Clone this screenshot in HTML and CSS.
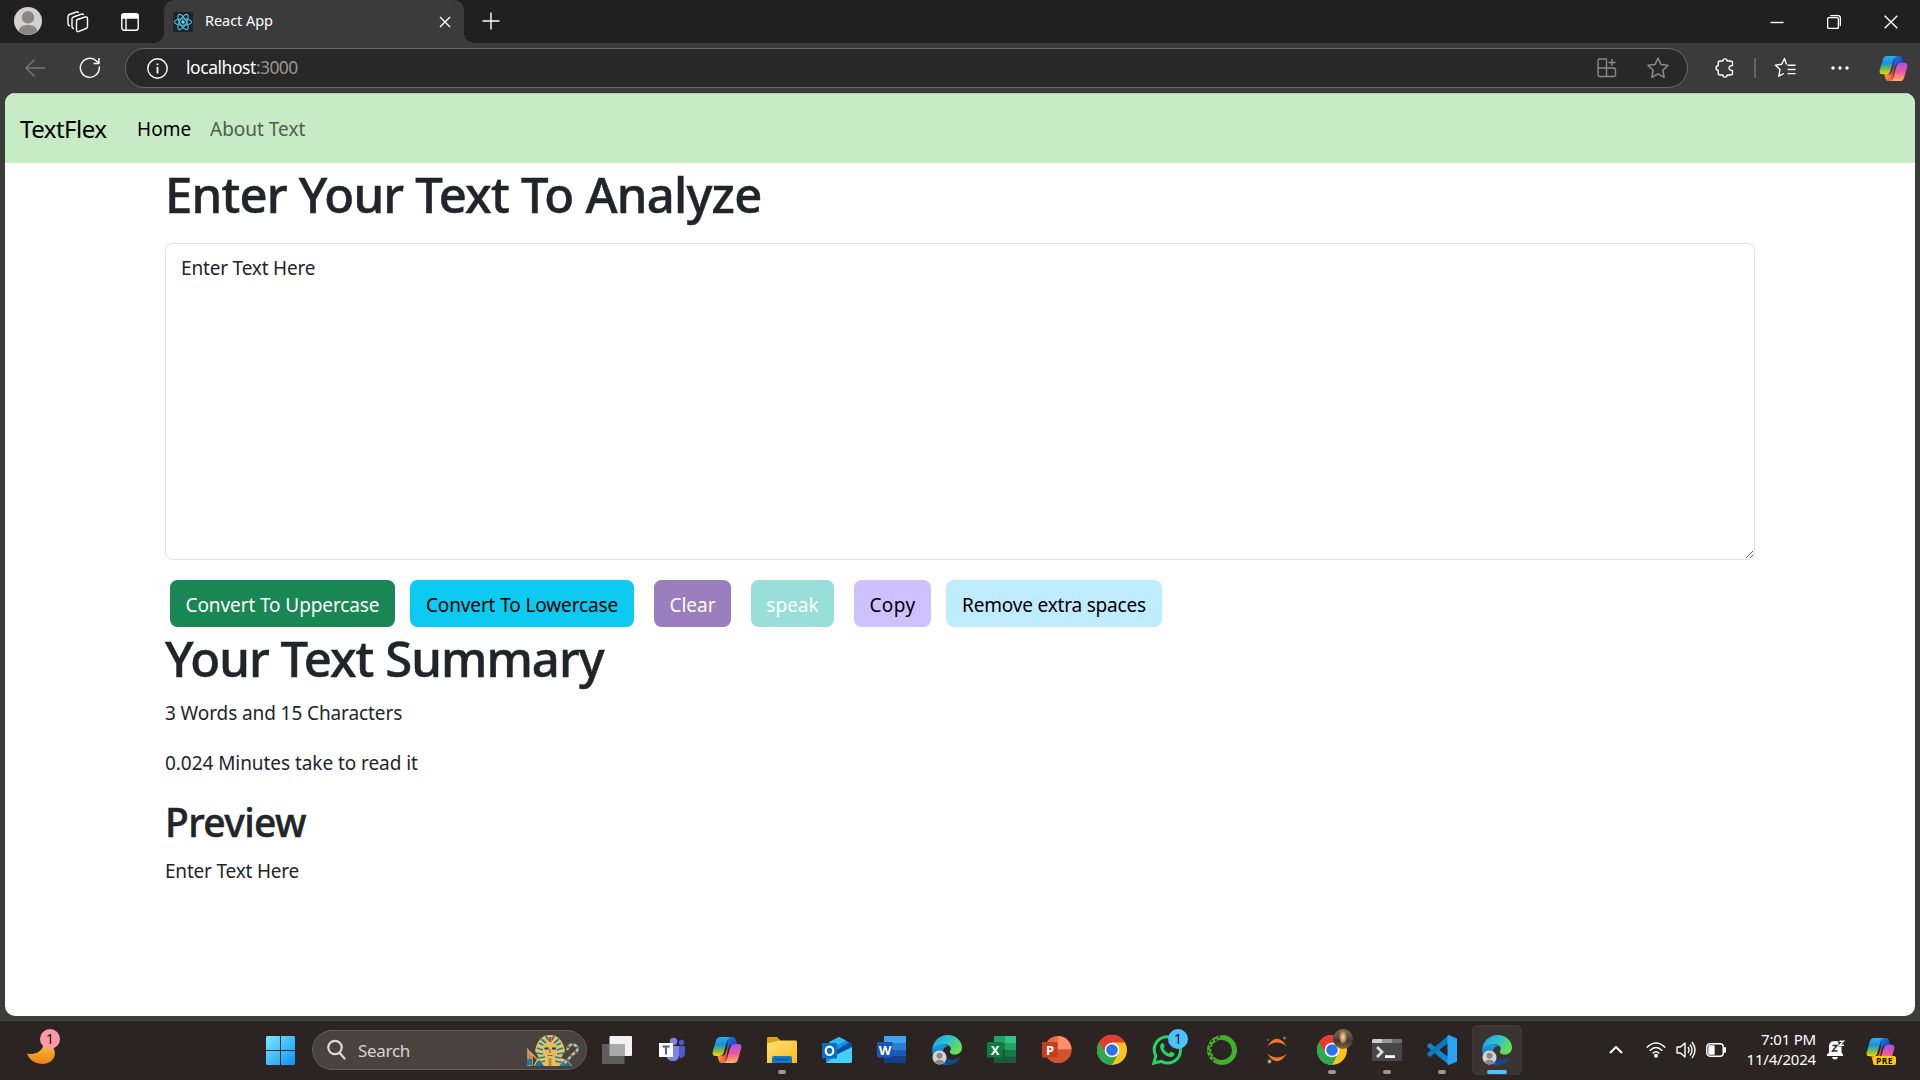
FILE: index.html
```
<!DOCTYPE html>
<html lang="en">
<head>
<meta charset="utf-8">
<title>React App</title>
<link rel="stylesheet" href="styles.css">
</head>
<body>
<svg class="defs" width="0" height="0" aria-hidden="true">
  <defs>
    <linearGradient id="cpA" x1="0" y1="0" x2="0" y2="1"><stop offset="0" stop-color="#21b4f0"/><stop offset=".4" stop-color="#1e8edb"/><stop offset=".7" stop-color="#6cbf50"/><stop offset="1" stop-color="#fbd303"/></linearGradient>
    <linearGradient id="cpB" x1="0" y1="0" x2="0" y2="1"><stop offset="0" stop-color="#a053f0"/><stop offset=".5" stop-color="#f0569a"/><stop offset="1" stop-color="#ffb45c"/></linearGradient>
    <linearGradient id="cpC" x1="0" y1="0" x2="1" y2="1"><stop offset="0" stop-color="#1d7be0"/><stop offset="1" stop-color="#1c33c0"/></linearGradient>
    <linearGradient id="cpD" x1="0" y1="0" x2="1" y2="0"><stop offset="0" stop-color="#ffa03c"/><stop offset="1" stop-color="#e8403c"/></linearGradient>
    <linearGradient id="edA" x1="0" y1="0" x2="1" y2=".5"><stop offset="0" stop-color="#22a0e8"/><stop offset=".5" stop-color="#2cc0d6"/><stop offset="1" stop-color="#66e052"/></linearGradient>
    <linearGradient id="edB" x1="0" y1="0" x2="0" y2="1"><stop offset="0" stop-color="#1b9de2"/><stop offset="1" stop-color="#0d5cb4"/></linearGradient>
    <linearGradient id="win" x1="0" y1="0" x2="1" y2="1"><stop offset="0" stop-color="#7deaff"/><stop offset="1" stop-color="#0a93f8"/></linearGradient>
    <linearGradient id="fold" x1="0" y1="0" x2="1" y2="1"><stop offset="0" stop-color="#ffe07c"/><stop offset="1" stop-color="#fbbc16"/></linearGradient>
    <linearGradient id="moon" x1="0" y1="0" x2="0" y2="1"><stop offset="0" stop-color="#f9c33b"/><stop offset="1" stop-color="#ee7d1a"/></linearGradient>
    <symbol id="copilot" viewBox="0 0 30 28">
      <path d="M16 1h4.500q2.500 0 3.300 2.500L25 8h-4q-3 0-4 3l-2.500 7z" fill="url(#cpC)"/>
      <path d="M14 27H10Q7.500 27 6.700 24.500L5.500 20h4q3 0 4-3l2.500-7z" fill="url(#cpD)"/>
      <path d="M8.500 1H18q-2 .8-2.800 3.500L11.700 16.500Q10.800 20 7.500 20H3.500Q0 20 .7 16L4 4.500Q5 1 8.500 1z" fill="url(#cpA)"/>
      <path d="M21.500 27H12q2-.8 2.800-3.500l3.500-12Q19.200 8 22.500 8h4Q30 8 29.300 12L26 23.500Q25 27 21.500 27z" fill="url(#cpB)"/>
    </symbol>
    <symbol id="edge" viewBox="0 0 30 30">
      <path d="M.3 16C.2 7 7 .1 15.400.1 24.500.1 30 6.500 30 12.500c0 4.500-3.400 7-7 7-3 0-5.300-1.300-5.300-2.600 0-.8 1-1.300 1-3.200 0-2.300-2.500-4.400-6.200-4.400C6.500 9.300 1.500 12.500.3 16z" fill="url(#edA)"/>
      <path d="M.2 15.500C1 11.500 6 9.200 10 9.300c3 0 5.500.6 7 1.900-3.500-.7-6 2.800-6 6.300 0 6 5 11.500 11.500 9.500C19 29.500 16 30 13.800 29.900 5.500 29.500 0 23 .2 15.500z" fill="url(#edB)"/>
      <path d="M11.500 15c-1 7 5 11 10.500 9.500 2.500-.6 4.300-1.900 5.100-2.100.6-.1.800.4.400 1C25 27.300 21 29.700 16.500 29.900 11 29 8 19.500 11.500 15z" fill="#114a8c"/>
      <circle cx="7.500" cy="22.500" r="7" fill="#d5d3d1"/><circle cx="7.500" cy="20.700" r="3" fill="#8b8785"/><path d="M2.800 27.600c.5-3.700 8.900-3.700 9.400 0-2.700 2.500-6.700 2.500-9.400 0z" fill="#8b8785"/>
    </symbol>
    <symbol id="chrome" viewBox="0 0 30 30">
      <circle cx="15" cy="15" r="15" fill="#fcc31e"/>
      <path d="M2 7.500A15 15 0 0 0 15 30l6.300-11.500L15 15z" fill="#2da94f"/>
      <path d="M2 7.500A15 15 0 0 1 28 7.500H15L8.700 18.600z" fill="#e33b2e"/>
      <circle cx="15" cy="15" r="7.300" fill="#fff"/><circle cx="15" cy="15" r="5.800" fill="#2a72ea"/>
    </symbol>
    <symbol id="star" viewBox="0 0 20 20"><path d="M10 1l2.700 5.800 6.300.8-4.600 4.400 1.200 6.500L10 15.400 4.400 18.500 5.600 12 1 7.600l6.300-.8z"/></symbol>
  </defs>
</svg>

<div class="tabbar">
  <svg class="avatar" width="28" height="28" viewBox="0 0 28 28"><circle cx="14" cy="14" r="14" fill="#d3d1cf"/><circle cx="14" cy="10.300" r="6.200" fill="#8a8684"/><path d="M4.700 24.200C5.500 16 22.500 16 23.300 24.200 18 29 10 29 4.700 24.200z" fill="#8a8684"/></svg>
  <svg class="line workspaces" width="22" height="22" viewBox="0 0 22 22"><path d="M10.500 8.500 18 6q2.500-.7 2.500 1.500v8q0 1.500-1.400 2L12 20.300q-2.500.8-2.500-1.300v-9q0-1.100 1-1.500zM7 17.500q-2 0-2-2V8q0-1.500 1.400-2l8-2.800q1.600-.5 2.200.8M3 14.800q-2-.2-2-2V5.500Q1 4 2.400 3.500l7-2.500q1.600-.5 2.300.8"/></svg>
  <svg class="line tabactions" width="18" height="18" viewBox="0 0 18 18"><rect x=".8" y=".8" width="16.400" height="16.400" rx="2.500"/><path d="M1 1.500h16V5H1z" fill="#fff"/><path d="M5 5v12"/></svg>
  <div class="tab">
    <svg class="favicon" width="20" height="20" viewBox="0 0 20 20"><rect width="20" height="20" rx="2" fill="#20232a"/><g fill="none" stroke="#55c3df" stroke-width="1.100"><ellipse cx="10" cy="10" rx="8.600" ry="3.300"/><ellipse cx="10" cy="10" rx="8.600" ry="3.300" transform="rotate(60 10 10)"/><ellipse cx="10" cy="10" rx="8.600" ry="3.300" transform="rotate(120 10 10)"/></g><circle cx="10" cy="10" r="1.700" fill="#61dafb"/></svg>
    <span class="tab-title">React App</span>
    <svg class="line" width="12" height="12" viewBox="0 0 12 12"><path d="M1 1l10 10M11 1L1 11"/></svg>
  </div>
  <svg class="line newtab" width="18" height="18" viewBox="0 0 18 18"><path d="M9 .5v17M.5 9h17"/></svg>
  <div class="window-controls">
    <svg class="line" width="14" height="14" viewBox="0 0 14 14"><path d="M.5 7.500h13"/></svg>
    <svg class="line" width="14" height="14" viewBox="0 0 14 14"><rect x=".6" y="2.600" width="10.800" height="10.800" rx="1.500"/><path d="M3 .6h8q2.400 0 2.400 2.400v8"/></svg>
    <svg class="line" width="14" height="14" viewBox="0 0 14 14"><path d="M.7.700l12.600 12.600M13.300.700L.7 13.300"/></svg>
  </div>
</div>

<div class="toolbar">
  <svg class="line dim back" width="20" height="18" viewBox="0 0 20 18"><path d="M20 9H1M9.500.5L1 9l8.500 8.500"/></svg>
  <svg class="line refresh" width="22" height="22" viewBox="0 0 22 22"><path d="M20.300 9.500A9.500 9.500 0 1 1 17.500 4l2.300 2.200M20 1v5.500h-5.500"/></svg>
  <div class="address">
    <svg class="line" width="21" height="21" viewBox="0 0 21 21"><circle cx="10.500" cy="10.500" r="9.700"/><path d="M10.500 9v6.500M10.500 5.500v1.800" stroke-width="1.800"/></svg>
    <span class="url">localhost<span class="port">:3000</span></span>
    <svg class="line gray apps" width="20" height="20" viewBox="0 0 20 20"><path d="M1 3q0-2 2-2h6.500v17.500H3q-2 0-2-2zM1 10h16q1.500 0 1.500 1.500v5q0 2-2 2H9.500M15 1v7M11.500 4.500h7"/></svg>
    <svg class="line gray" width="22" height="22" viewBox="0 0 20 20"><use href="#star"/></svg>
  </div>
  <svg class="line puzzle" width="20" height="20" viewBox="0 0 20 20"><path d="M5 3h2.800C8 .2 12 .2 12.200 3H15.500q2 0 2 2v2.500c-4.600-.4-4.600 5.400 0 5V15q0 2-2 2h-3.300c-.2 2.800-4.200 2.800-4.400 0H5q-1.800 0-1.800-2v-2.800C.3 12 .3 8 3.200 7.800V5Q3.200 3 5 3z"/></svg>
  <i class="divider"></i>
  <svg class="line favs" width="22" height="22" viewBox="0 0 22 22"><path d="M12.500 7.500 10.500 1.500 7.700 7.300 1.300 8.100l4.700 4.400-1.200 6.700 5-2.700M13.500 8.300h8M13.500 12.500h8M13.500 16.600h8"/></svg>
  <svg class="dots" width="18" height="4" viewBox="0 0 18 4"><circle cx="2" cy="2" r="1.700"/><circle cx="9" cy="2" r="1.700"/><circle cx="16" cy="2" r="1.700"/></svg>
  <svg width="29" height="27"><use href="#copilot"/></svg>
</div>

<main class="page">
  <nav class="navbar">
    <a class="brand">TextFlex</a>
    <a class="home">Home</a>
    <a class="about">About Text</a>
  </nav>
  <div class="container">
    <h1 class="title">Enter Your Text To Analyze</h1>
    <textarea class="input">Enter Text Here</textarea>
    <div class="buttons">
      <button class="btn upper">Convert To Uppercase</button>
      <button class="btn lower">Convert To Lowercase</button>
      <button class="btn clear">Clear</button>
      <button class="btn speak">speak</button>
      <button class="btn copy">Copy</button>
      <button class="btn spaces">Remove extra spaces</button>
    </div>
    <h1 class="title summary">Your Text Summary</h1>
    <p>3 Words and 15 Characters</p>
    <p class="reading">0.024 Minutes take to read it</p>
    <h2>Preview</h2>
    <p class="preview">Enter Text Here</p>
  </div>
</main>

<footer class="taskbar">
  <div class="weather">
    <svg width="28" height="22" viewBox="0 0 28 22"><path d="M0 10.500C8 12.500 15 9 17.500 0 26 0 29 8 27.500 13 24 24 5 24 0 10.500z" fill="url(#moon)"/></svg>
    <span class="badge pink">1</span>
  </div>
  <svg class="start" width="29" height="29" viewBox="0 0 29 29"><path d="M1 0h13v14H0V1zM15 0h13l1 1v13H15zM0 15h14v14H1l-1-1zM15 15h14v13l-1 1H15z" fill="url(#win)"/></svg>
  <div class="search">
    <svg width="20" height="22" viewBox="0 0 20 22" fill="none" stroke="#dcdada" stroke-width="2.200"><circle cx="8" cy="8.500" r="6.700"/><path d="M12.800 14l4.700 5.500" stroke-linecap="round"/></svg>
    <span>Search</span>
    <svg class="pharaoh" width="52" height="34" viewBox="0 0 52 34">
      <path d="M1 17v15h4V23zM3 19l8 8" fill="#c87a3c" stroke="#d9a35a" stroke-width="1.500"/><path d="M0 26h5v6H0z" fill="#1b7fa0"/>
      <path d="M7 33q1-5 5-8L8 18Q11 2 23 2t15 16l-4 7q8 2 11 8z" fill="#e9c25b"/>
      <path d="M12 10l6 3M10 15l6 2M9 20l7 1M14 6l5 4M34 10l-6 3M36 15l-6 2M37 20l-7 1M32 6l-5 4M19 3l2 4M27 3l-2 4M12 25l6-1M10 30l8-2M34 25l-6-1M37 30l-9-2" stroke="#1680a8" stroke-width="1.700"/>
      <path d="M8 33q1-4 4-6l5 6zM44 33q-2-4-6-6l-6 6z" fill="#1d6f96"/>
      <path d="M16 12q7-5 14 0l-.5 8q-2 6-6.500 6t-6.500-6z" fill="#e5ba62"/><path d="M17.500 15.500h4M25 15.500h4" stroke="#194253" stroke-width="2"/><path d="M23 16v4M20.500 22.500h5" stroke="#9a632a" stroke-width="1.200"/><path d="M21.500 25h3v8h-3z" fill="#c48a35"/><path d="M21.500 4h3v5h-3z" fill="#d6443a"/>
      <path d="M36 32 46 21q6-3 4-7.500-4-4-8-.5-2 2-1 4" fill="none" stroke="#e4bd68" stroke-width="2.600"/><path d="M36 32 46 21q6-3 4-7.500-4-4-8-.5-2 2-1 4" fill="none" stroke="#1680a8" stroke-width="2.600" stroke-dasharray="2.500 3"/>
    </svg>
  </div>
  <div class="apps-row">
    <div class="app"><svg width="30" height="30" viewBox="0 0 30 30"><rect x="7.500" y="1" width="22.500" height="20" rx="1" fill="#f2f2f2"/><rect y="9" width="22.500" height="20" rx="1" fill="#666" opacity=".9"/><path d="M7.500 9h15v12h-15z" fill="#aaa"/></svg></div>
    <div class="app"><svg width="30" height="30" viewBox="0 0 30 30"><circle cx="16.500" cy="6.500" r="3.700" fill="#7b83eb"/><circle cx="24.500" cy="7.500" r="2.700" fill="#5059c9"/><path d="M19 11h9v7q0 5-5 5z" fill="#5059c9"/><path d="M9 11h13v9q0 6-6 6t-7-6z" fill="#7b83eb"/><rect x="2" y="8" width="14" height="14" fill="#fff"/><path d="M5.500 11.500h7M9 11.500v8" stroke="#5059c9" stroke-width="2"/></svg></div>
    <div class="app"><svg width="30" height="28"><use href="#copilot"/></svg></div>
    <div class="app run"><svg width="30" height="30" viewBox="0 0 30 30"><path d="M0 3q0-1 1-1h9l3 3v5H0z" fill="#e09f05"/><path d="M0 8.500 12 5.500h17l1 1V28H0z" fill="url(#fold)"/><path d="M5 28v-5q0-2 2-2h16q2 0 2 2v5z" fill="#1478c9"/><path d="M8 24.500h14" stroke="#0c559a" stroke-width="1.500"/></svg></div>
    <div class="app"><svg width="30" height="30" viewBox="0 0 30 30"><path d="M4 9 17 2l13 7v17q0 2-2 2H4z" fill="#1490df"/><path d="M7 7l10-5 7 3.500L12 12z" fill="#35b8f1"/><path d="M13 16 28 7l2 2v3L16 21z" fill="#0a4da2"/><path d="M30 12v14q0 2-2 2H4l10-8z" fill="#42d0f8"/><rect y="8" width="15" height="15.500" rx="1" fill="#0f6cc4"/><ellipse cx="7.500" cy="15.800" rx="3.800" ry="4.200" fill="none" stroke="#fff" stroke-width="2.200"/></svg></div>
    <div class="app office word"><svg width="30" height="30" viewBox="0 0 30 30"><path d="M7 1h22v7H7z" fill="#41a5ee"/><path d="M7 8h22v7H7z" fill="#2b7cd3"/><path d="M7 15h22v6.500H7z" fill="#185abd"/><path d="M7 21.500h22V28H7z" fill="#103f91"/><rect y="7" width="15.500" height="15.500" rx="1" fill="#1a56b5"/></svg><b>W</b></div>
    <div class="app"><svg width="30" height="30"><use href="#edge"/></svg></div>
    <div class="app office"><svg width="30" height="30" viewBox="0 0 30 30"><path d="M7 1h11v7H7z" fill="#21a366"/><path d="M18 1h11v7H18z" fill="#33c481"/><path d="M7 8h11v7H7z" fill="#107c41"/><path d="M18 8h11v7H18z" fill="#21a366"/><path d="M7 15h22v13H7z" fill="#185c37"/><path d="M18 15h11v6.500H18z" fill="#107c41"/><rect y="7" width="15.500" height="15.500" rx="1" fill="#107c41"/></svg><b>X</b></div>
    <div class="app office"><svg width="30" height="30" viewBox="0 0 30 30"><circle cx="16" cy="14.500" r="13.500" fill="#ed6c47"/><path d="M16 1a13.500 13.500 0 0 1 13.500 13.500H16z" fill="#ff8f6b"/><path d="M2.500 14.500h27a13.500 13.500 0 0 1-27 0z" fill="#d35230"/><rect y="7" width="15.500" height="15.500" rx="1" fill="#c43e1c"/></svg><b>P</b></div>
    <div class="app"><svg width="30" height="30"><use href="#chrome"/></svg></div>
    <div class="app"><svg width="30" height="30" viewBox="0 0 30 30"><path d="M1.800 28.200l2-7C-1 11 6 1.700 15.500 1.700A13 13 0 0 1 28.500 15c0 10-10 16-19 11.300z" fill="none" stroke="#25d366" stroke-width="3"/><path d="M8.500 9.500c2-3 3-1.500 4.200 1.800L11.500 13.500c1.300 2.500 3 4 5.500 5l2-2c3.500 1.500 4.500 2 3 4C17.500 26 6 16 8.500 9.500z" fill="#25d366"/></svg><span class="badge blue">1</span></div>
    <div class="app"><svg width="30" height="30" viewBox="0 0 30 30"><path d="M15 2.500a12.500 12.500 0 0 1 0 25q-4 0-7-2" fill="none" stroke="#43b02a" stroke-width="5"/><path d="M15 2.500A12.500 12.500 0 0 0 8 25.500" fill="none" stroke="#43b02a" stroke-width="4.500"/><g fill="#2c2423"><circle cx="12" cy="2" r="1"/><circle cx="9" cy="5" r="1.200"/><circle cx="5" cy="6" r="1"/><circle cx="6.500" cy="9.500" r="1"/><circle cx="2.500" cy="10" r="1"/><circle cx="4" cy="13" r="1.200"/><circle cx="1.500" cy="16" r="1"/><circle cx="4.500" cy="17.500" r="1"/><circle cx="3" cy="21" r="1"/><circle cx="6.500" cy="21.500" r="1"/><circle cx="6" cy="25" r="1"/></g></svg></div>
    <div class="app"><svg width="30" height="30" viewBox="0 0 30 30"><path d="M5 11.500Q15-4 25 11.500 15 3.500 5 11.500zM5 18.500Q15 34 25 18.500 15 26.500 5 18.500z" fill="#f37726"/><circle cx="22.500" cy="3" r="1.500" fill="#767677"/><circle cx="7.500" cy="26.500" r="1.900" fill="#9e9e9e"/><circle cx="6" cy="5" r="1" fill="#616262"/></svg></div>
    <div class="app run"><svg width="30" height="30"><use href="#chrome"/></svg><span class="badge photo"></span></div>
    <div class="app run"><svg width="30" height="30" viewBox="0 0 30 30"><rect y="4" width="30" height="22" rx="1.500" fill="#474747"/><path d="M0 8V5.500Q0 4 1.500 4H10v4z" fill="#d0d0d0"/><path d="M10 4h10v4H10z" fill="#999"/><path d="M20 4h8.500Q30 4 30 5.500V8H20z" fill="#707070"/><path d="M5 12l5 5-5 5" fill="none" stroke="#ddd" stroke-width="2.800"/><path d="M13 20.200h10v2.800H13z" fill="#fff"/></svg></div>
    <div class="app run"><svg width="30" height="30" viewBox="0 0 30 30"><path d="M.8 9.500 3 8 22 22.500V30L.5 12q-1-1 .3-2.500z" fill="#1187d0"/><path d="M.8 20.500 3 22 22 7.500V0L.5 18q-1 1 .3 2.500z" fill="#0d78be"/><path d="M21.500 0 30 3.500v23L21.500 30l-1-1V1z" fill="#2aa5f5"/></svg></div>
    <div class="app run active"><svg width="30" height="30"><use href="#edge"/></svg></div>
  </div>
  <div class="tray">
    <svg class="line thick" width="14" height="8" viewBox="0 0 14 8"><path d="M1 7l6-6 6 6"/></svg>
    <svg class="line wifi" width="20" height="16" viewBox="0 0 20 16"><path d="M.7 5.500q9.300-9 18.600 0M3.700 8.700q6.300-6.200 12.600 0M6.600 11.500q3.400-3.400 6.800 0"/><circle cx="10" cy="13.800" r="1.300" fill="#fff"/></svg>
    <svg class="line" width="20" height="18" viewBox="0 0 20 18"><path d="M1 6h3.500L9 2v14l-4.500-4H1zM12 6q2 3 0 6M14 3.500q4 5.500 0 11M16 1q6 8 0 16"/></svg>
    <svg class="line" width="20" height="14" viewBox="0 0 20 14"><rect x=".8" y=".8" width="16.400" height="12.400" rx="3"/><path d="M3 3h5v8H3zM18 5h1.500v4H18z" fill="#fff"/></svg>
    <div class="clock"><div>7:01 PM</div><div>11/4/2024</div></div>
    <svg class="bell" width="18" height="20" viewBox="0 0 18 20"><path d="M8 1C3 1 2 4 2 7v5.500L0 14.500V16h16v-1.500l-1.500-2V7c0-4-2.500-6-6.500-6zM5 17h6q-.5 2.500-3 2.500T5 17z" fill="#fff"/><path d="M5.500 5.500h4.500l-4.500 5.500H10.500" fill="none" stroke="#2c2423" stroke-width="1.400"/><path d="M11.500 0H18v6.500h-6.500z" fill="#2c2423"/><path d="M12.500 1.200H16.500l-4 4h4.500" fill="none" stroke="#fff" stroke-width="1.400"/></svg>
    <div class="pre"><svg width="29" height="27"><use href="#copilot"/></svg><span>PRE</span></div>
  </div>
</footer>
</body>
</html>
```
FILE: styles.css
```
* { box-sizing: border-box; }
body {
  margin: 0;
  width: 1920px;
  height: 1080px;
  overflow: hidden;
  display: flex;
  flex-direction: column;
  background: #3b3b3b;
  font-family: "Noto Sans", "Open Sans", sans-serif;
  font-size: 19px;
  color: #212529;
}
svg { display: block; flex: none; }
.defs { position: absolute; }
.line { fill: none; stroke: #fff; stroke-width: 1.4; stroke-linejoin: round; }
.line.thick { stroke-width: 2; }
.line.dim { stroke: #787878; }
.line.gray { stroke: #8a8a8a; }

/* Tab strip */
.tabbar { flex: none; height: 43px; background: #202020; display: flex; align-items: center; padding-left: 14px; }
.avatar { margin-bottom: 1px; }
.workspaces { margin-left: 25px; }
.tabactions { margin-left: 32px; }
.tab {
  position: relative;
  margin-left: 25px;
  width: 300px;
  height: 43px;
  padding: 0 13px 0 9px;
  background: #3b3b3b;
  border-radius: 10px 10px 0 0;
  display: flex;
  align-items: center;
}
.tab::before, .tab::after {
  content: "";
  position: absolute;
  bottom: 0;
  width: 10px;
  height: 10px;
  background: radial-gradient(circle at 0 0, transparent 9.5px, #3b3b3b 10px);
}
.tab::before { left: -10px; }
.tab::after { right: -10px; transform: scaleX(-1); }
.tab-title { flex: 1; margin: 0 0 4px 12px; color: #fff; font-size: 14.5px; letter-spacing: -.05px; }
.newtab { margin: 0 0 1px 18px; }
.window-controls { flex: 1; display: flex; justify-content: flex-end; gap: 43px; padding-right: 22px; }

/* Address row */
.toolbar { flex: none; height: 50px; display: flex; align-items: center; padding-left: 25px; }
.refresh { margin-left: 34px; }
.address {
  width: 1563px;
  height: 40px;
  margin-left: 24px;
  padding: 0 18px 0 21px;
  display: flex;
  align-items: center;
  background: #282828;
  border: 1px solid #686868;
  border-radius: 20px;
}
.url { flex: 1; margin: 0 0 2px 18px; color: #fff; font-size: 17.5px; letter-spacing: -.45px; }
.port { color: #969696; letter-spacing: -.6px; }
.apps { margin-right: 30px; }
.puzzle { margin-left: 27px; }
.divider { width: 2px; height: 20px; margin-left: 19px; background: #636363; }
.favs { margin-left: 18px; }
.dots { margin: 0 30px 0 35px; fill: #fff; }

/* Page */
.page { flex: none; height: 923px; margin: 0 5px; background: #fff; border-radius: 10px; overflow: hidden; }
.navbar { height: 70px; padding: 0 0 0 15px; background: #c7ebc5; border-top: 1px solid #b4cab3; display: flex; align-items: center; color: #000; }
.brand { width: 117px; font-size: 24px; letter-spacing: -.5px; }
.home { width: 73px; letter-spacing: .05px; }
.about { color: #4f5e4f; letter-spacing: 0; }
.container { padding: 1px 160px 0; }
.title, h2 { margin: 0; font-weight: 500; -webkit-text-stroke: .5px #212529; }
.title { height: 60px; line-height: 60px; font-size: 49px; letter-spacing: -.76px; white-space: nowrap; }
h2 { height: 48px; line-height: 48px; margin-bottom: 10px; font-size: 39px; letter-spacing: -.62px; }
.input {
  display: block;
  width: 1590px;
  height: 317px;
  margin-top: 19px;
  padding: 9px 15px;
  border: 1px solid #dee2e6;
  border-radius: 7.5px;
  outline: 0;
  resize: vertical;
  background: #fff;
  color: #212529;
  font: 19px/30px "Noto Sans", "Open Sans", sans-serif;
  letter-spacing: -.18px;
}
.buttons { display: flex; margin-top: 20px; padding-left: 5px; }
.btn { height: 47px; padding: 2px 0 0; border: 0; border-radius: 7.5px; font: 19px/30px "Noto Sans", "Open Sans", sans-serif; white-space: nowrap; color: #000; }
.upper { width: 225px; background: #198754; color: #fff; letter-spacing: -.1px; }
.lower { width: 224px; margin-left: 15px; background: #0dcaf0; letter-spacing: -.13px; }
.clear { width: 77px; margin-left: 20px; background: #9b7ebd; color: #fff; }
.speak { width: 83px; margin-left: 20px; background: #98ded9; color: #fff; }
.copy { width: 77px; margin-left: 20px; background: #cdc1ff; letter-spacing: .4px; }
.spaces { width: 216px; margin-left: 15px; background: #bfecff; letter-spacing: -.19px; }
.summary { margin: 1px 0 10px; letter-spacing: -.95px; }
p { margin: 0 0 20px; line-height: 30px; letter-spacing: -.1px; }
.reading { letter-spacing: -.06px; }
.preview { letter-spacing: -.2px; }

/* Taskbar */
.taskbar { flex: none; height: 60px; margin-top: 4px; padding-bottom: 1px; display: flex; align-items: center; background: #2c2423; border-top: 1px solid #474443; color: #fff; }
.weather { position: relative; width: 266px; padding: 8px 0 0 27px; }
.badge { position: absolute; width: 20px; height: 20px; border-radius: 50%; color: #111; font-size: 14px; line-height: 20px; text-align: center; }
.pink { left: 40px; top: -6px; background: #ff99a4; }
.blue { left: 26px; top: 4px; background: #4cc2ff; }
.photo { left: 26px; top: 4px; background: radial-gradient(ellipse 4px 7px at 50% 40%, #f0dfc4, #b0793f 80%, transparent), linear-gradient(#7d7358, #3e3a33 60%, #97602b); }
.search { width: 275px; height: 40px; margin-left: 17px; padding: 0 7px 0 14px; display: flex; align-items: center; background: #4a4240; border: 1px solid #625b59; border-radius: 20px; }
.search span { flex: 1; margin-left: 11px; color: #d8d5d4; font-size: 17px; letter-spacing: -.3px; }
.apps-row { display: flex; gap: 5px; margin-left: 5px; }
.app { position: relative; width: 50px; height: 50px; border-radius: 5px; display: flex; align-items: center; justify-content: center; }
.app.run::after { content: ""; position: absolute; left: 21px; bottom: 1px; width: 8px; height: 4px; border-radius: 2px; background: #9b9796; }
.app.active { background: #3a3332; border: 1px solid #403a39; }
.app.active::after { left: 14px; bottom: 0; width: 20px; background: #4cc2ff; }
.office b { position: absolute; left: 10px; top: 17px; width: 16px; height: 16px; font-size: 13px; line-height: 16px; text-align: center; }
.tray { flex: 1; display: flex; align-items: center; padding-left: 87px; }
.wifi { margin-left: 23px; }
.tray > .line + .line:not(.wifi) { margin-left: 10px; }
.clock { width: 90px; height: 42px; font-size: 15px; line-height: 20px; letter-spacing: -.2px; text-align: right; }
.bell { margin-left: 11px; }
.pre { position: relative; margin-left: 21px; }
.pre span { position: absolute; left: 7px; top: 19px; width: 23px; height: 9px; border-radius: 2px; background: #fdc70c; color: #111; font-size: 8.5px; font-weight: 700; line-height: 9px; letter-spacing: .5px; text-align: center; }
```
